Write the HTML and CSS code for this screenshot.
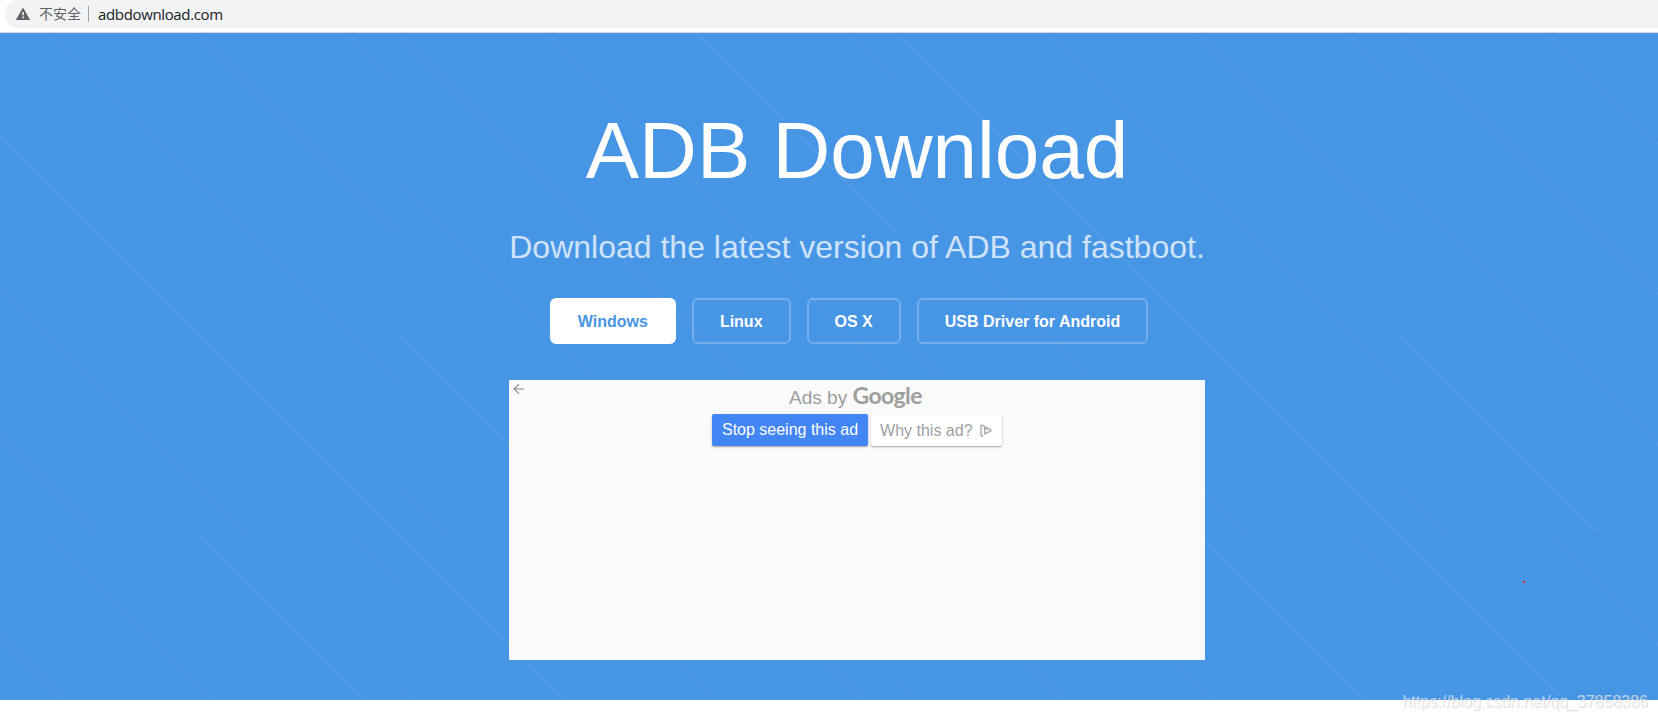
FILE: index.html
```html
<!DOCTYPE html>
<html lang="en">
<head>
  <meta charset="UTF-8">
  <title>ADB Download</title>
  <link rel="stylesheet" href="styles.css">
</head>
<body>
  <div class="toolbar">
    <div class="address">
      <svg class="warning" width="16" height="14" viewBox="0 0 16 14">
        <path d="M8 0.5 L15.2 13 H0.8 Z" fill="#5f6368"/>
        <path d="M7.2 5h1.7v3.2H7.2zM7.2 9.6h1.7v1.7H7.2z" fill="#f1f3f4"/>
      </svg>
      <span class="insecure">不安全</span>
      <span class="url">adbdownload.com</span>
    </div>
  </div>

  <header class="hero">
    <h1>ADB Download</h1>
    <p class="tagline">Download the latest version of ADB and fastboot.</p>
    <div class="buttons">
      <a class="btn btn-primary">Windows</a>
      <a class="btn">Linux</a>
      <a class="btn">OS X</a>
      <a class="btn">USB Driver for Android</a>
    </div>
    <div class="ad">
      <svg class="back" width="12" height="12" viewBox="0 0 12 12">
        <path d="M11 6H1.5M6 1.2L1.2 6L6 10.8" fill="none" stroke="#8a8a8a" stroke-width="1.2"/>
      </svg>
      <div class="ads-by">Ads by <span class="google">Google</span></div>
      <div class="ad-actions">
        <a class="stop">Stop seeing this ad</a>
        <a class="why">Why this ad?
          <svg width="12" height="13" viewBox="0 0 12 13">
            <path d="M3.4 11.6L2 12Q1 12.1 1 11V2Q1 0.8 2.1 1.1L10.4 5.6Q11.6 6.4 10.4 7.2L4.6 9.9V4.2L7.4 6" fill="none" stroke="#a9a9ad" stroke-width="1.4"/>
          </svg>
        </a>
      </div>
    </div>
    <span class="dot"></span>
  </header>
  <div class="watermark">https://blog.csdn.net/qq_37858386</div>
</body>
</html>
```

FILE: styles.css
```css
* {
  box-sizing: border-box;
}

body {
  margin: 0;
  height: 721px;
  position: relative;
  overflow: hidden;
  background: #fff;
  font-family: "Liberation Sans", Arial, sans-serif;
}

.toolbar {
  height: 33px;
  padding-left: 5px;
  border-bottom: 1px solid #d5d8dc;
}

.address {
  display: flex;
  align-items: center;
  height: 28px;
  padding-left: 10px;
  background: #f1f3f4;
  border-radius: 14px 0 0 14px;
  font-family: "Open Sans", "Noto Sans CJK SC", sans-serif;
  font-size: 14px;
}

.insecure {
  margin-left: 8px;
  padding-right: 7px;
  border-right: 1px solid #9aa0a6;
  line-height: 16px;
  color: #5f6368;
}

.url {
  margin-left: 9px;
  padding-bottom: 1px;
  font-size: 15px;
  letter-spacing: -.35px;
  color: #202124;
}

.hero {
  position: relative;
  display: flex;
  flex-direction: column;
  align-items: center;
  height: 667px;
  padding: 72px 0 0 56px;
  background-color: #4795e5;
  background-image: repeating-linear-gradient(45deg, transparent 0, transparent 34.2px, rgba(255, 255, 255, .06) 35px, rgba(255, 255, 255, .06) 35.8px, transparent 36.6px, transparent 106.066px);
  background-size: 500px 500px;
  background-position: -103px 0;
}

h1 {
  margin: 0;
  font-size: 80px;
  font-weight: normal;
  line-height: 92px;
  color: #fff;
}

.tagline {
  margin: 31px 0 0;
  font-size: 32px;
  line-height: 38px;
  white-space: nowrap;
  color: #cfe3f8;
}

.buttons {
  display: flex;
  margin-top: 32px;
}

.btn {
  height: 46px;
  margin-right: 16px;
  padding: 0 26px;
  border: 2px solid rgba(255, 255, 255, .25);
  border-radius: 6px;
  font-size: 16px;
  font-weight: bold;
  line-height: 43px;
  color: #fff;
}

.btn-primary {
  background: #fff;
  border-color: #fff;
  color: #4795e5;
}

.ad {
  position: relative;
  width: 696px;
  height: 280px;
  margin-top: 36px;
  background: #fafafa;
  text-align: center;
}

.back {
  position: absolute;
  left: 4px;
  top: 3px;
}

.ads-by {
  height: 34px;
  padding-right: 3px;
  font-size: 19px;
  line-height: 33px;
  color: #9e9e9e;
}

.google {
  font-family: Lato, sans-serif;
  font-size: 23px;
  font-weight: bold;
  letter-spacing: -.6px;
  line-height: 30px;
}

.ad-actions {
  display: flex;
  justify-content: center;
  gap: 3px;
}

.stop,
.why {
  display: flex;
  align-items: center;
  height: 32px;
  border-radius: 2px;
  font-size: 16px;
  box-shadow: 0 1px 2px rgba(0, 0, 0, .35);
}

.stop {
  padding: 0 9.5px;
  background: #4285f4;
  color: #fff;
}

.why {
  gap: 7px;
  padding: 1px 10px 0 9.5px;
  background: #fff;
  color: #9e9ea3;
}

.dot {
  position: absolute;
  left: 1523px;
  top: 548px;
  width: 2px;
  height: 2px;
  background: #e0203a;
}

.watermark {
  position: absolute;
  right: 10px;
  bottom: 9px;
  font-size: 16px;
  line-height: 20px;
  color: rgba(255, 255, 255, .6);
  text-shadow: 1px 1px 1px rgba(160, 160, 160, .4);
}
```
